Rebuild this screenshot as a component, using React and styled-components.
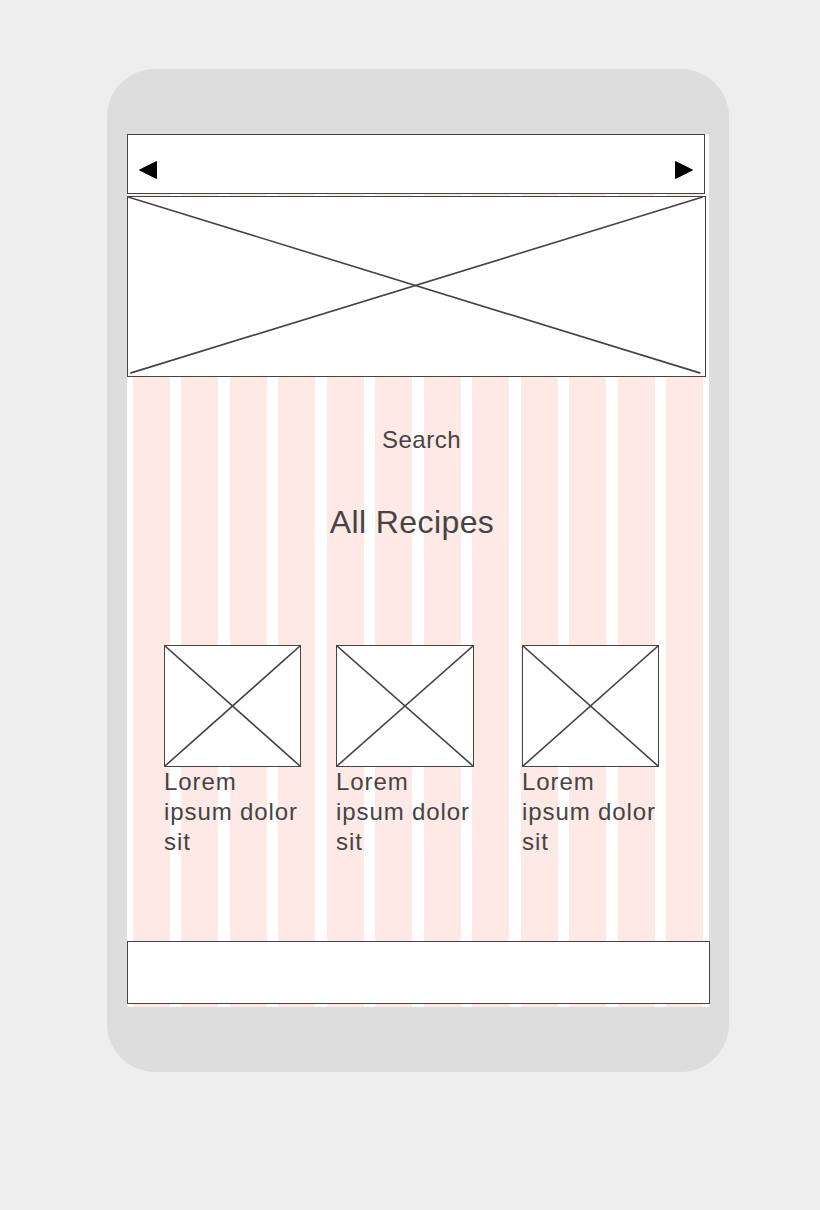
import React from "react";
import styled, { createGlobalStyle } from "styled-components";

const GlobalStyle = createGlobalStyle`
  html, body {
    margin: 0;
    padding: 0;
    background: #eeeeee;
    font-family: "Liberation Sans", Arial, sans-serif;
    color: #444444;
  }
`;

const cards = [
  { offset: 37, width: 137 },
  { offset: 35, width: 138 },
  { offset: 48, width: 137 },
];

function LeftArrow() {
  return (
    <svg width="18" height="18" viewBox="0 0 18 18">
      <polygon points="17.5,0.5 17.5,17.5 0.5,9" fill="#000" stroke="#000" strokeLinejoin="round" />
    </svg>
  );
}

function RightArrow() {
  return (
    <svg width="18" height="18" viewBox="0 0 18 18">
      <polygon points="0.5,0.5 0.5,17.5 17.5,9" fill="#000" stroke="#000" strokeLinejoin="round" />
    </svg>
  );
}

function Placeholder({ inset }) {
  // crossed box, the usual wireframe image stand-in
  const i = inset || 0;
  return (
    <Cross viewBox="0 0 100 100" preserveAspectRatio="none">
      <line x1="0" y1="0" x2={100 - i} y2={100 - i * 2} vectorEffect="non-scaling-stroke" />
      <line x1={i / 2} y1={100 - i * 2} x2={100 - i / 2} y2="0" vectorEffect="non-scaling-stroke" />
    </Cross>
  );
}

function App() {
  return (
    <>
      <GlobalStyle />
      <Phone>
        <Screen>
          <GridOverlay>
            {Array.from({ length: 12 }).map((_, i) => (
              <GridColumn key={i} />
            ))}
          </GridOverlay>
          <NavBar>
            <LeftArrow />
            <RightArrow />
          </NavBar>
          <Hero>
            <Placeholder inset={0.8} />
          </Hero>
          <SearchLabel>Search</SearchLabel>
          <Title>All Recipes</Title>
          <CardRow>
            {cards.map((c, i) => (
              <Card key={i} $offset={c.offset} $width={c.width}>
                <Thumb>
                  <Placeholder />
                </Thumb>
                <CardText>Lorem ipsum dolor sit</CardText>
              </Card>
            ))}
          </CardRow>
          <Footer />
        </Screen>
      </Phone>
    </>
  );
}

const Phone = styled.div`
  width: 622px;
  margin: 69px 0 0 107px;
  padding: 65px 20px;
  box-sizing: border-box;
  background: #dddddd;
  border-radius: 48px;
`;

const Screen = styled.div`
  position: relative;
  background: #ffffff;
  display: flex;
  flex-direction: column;
  padding-bottom: 3px;
`;

const GridOverlay = styled.div`
  position: absolute;
  inset: 0 6px;
  display: grid;
  grid-template-columns: repeat(12, 1fr);
  column-gap: 11.5px;
  pointer-events: none;
`;

const GridColumn = styled.div`
  background: #ffe9e6;
`;

const NavBar = styled.div`
  position: relative;
  width: 578px;
  height: 60px;
  box-sizing: border-box;
  border: 1px solid #444;
  background: #fff;
  display: flex;
  justify-content: space-between;
  align-items: flex-end;
  padding: 0 11px 14px 11px;
`;

const Hero = styled.div`
  position: relative;
  margin-top: 2px;
  width: 579px;
  height: 181px;
  box-sizing: border-box;
  border: 1px solid #444;
  background: #fff;
`;

const Cross = styled.svg`
  display: block;
  width: 100%;
  height: 100%;
  line {
    stroke: #444;
    stroke-width: 1.6;
  }
`;

const SearchLabel = styled.div`
  position: relative;
  margin-top: 49px;
  padding-left: 7px;
  font-size: 24px;
  line-height: 28px;
  letter-spacing: 0.5px;
  text-align: center;
`;

const Title = styled.h1`
  position: relative;
  margin: 50px 0 0;
  padding-right: 12px;
  font-size: 32px;
  font-weight: 400;
  line-height: 37px;
  letter-spacing: 0.4px;
  text-align: center;
`;

const CardRow = styled.div`
  position: relative;
  display: flex;
  align-items: flex-start;
  margin-top: 104px;
`;

const Card = styled.div`
  width: ${(p) => p.$width}px;
  margin-left: ${(p) => p.$offset}px;
  display: flex;
  flex-direction: column;
`;

const Thumb = styled.div`
  height: 122px;
  box-sizing: border-box;
  border: 1px solid #444;
  background: #fff;
`;

const CardText = styled.div`
  font-size: 24px;
  line-height: 30px;
  letter-spacing: 0.9px;
`;

const Footer = styled.div`
  position: relative;
  margin-top: 84px;
  width: 583px;
  height: 63px;
  box-sizing: border-box;
  border: 1px solid #444;
  background: #fff;
`;

export default App;
